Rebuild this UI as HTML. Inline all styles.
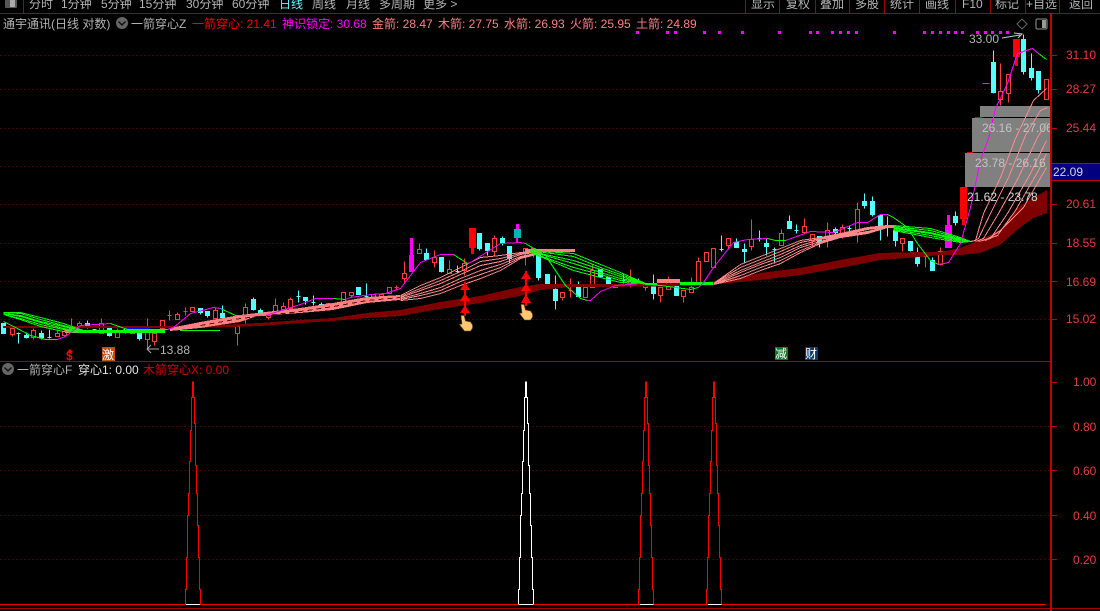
<!DOCTYPE html>
<html><head><meta charset="utf-8"><style>
html,body{margin:0;padding:0;background:#000;overflow:hidden}
svg{display:block}
text{font-family:"Liberation Sans","WenQuanYi Zen Hei","Noto Sans CJK SC",sans-serif;font-size:12px;letter-spacing:0}
.g{fill:#b4b4b4}.a{fill:#e83c3c}.p{fill:#ff8080}
</style></head><body>
<svg width="1100" height="611" viewBox="0 0 1100 611" xmlns="http://www.w3.org/2000/svg">
<defs><clipPath id="c"><rect x="0" y="0" width="1050" height="611"/></clipPath></defs>
<rect width="1100" height="611" fill="#000"/>
<g shape-rendering="crispEdges">
<g fill="none" stroke="#7a1010" stroke-dasharray="1 3" transform="translate(.5 .5)">
<path d="M0 55H1050M0 89H1050M0 128H1050M0 166H1050M0 204H1050M0 243H1050M0 281H1050M0 319H1050M0 426H1050M0 470H1050M0 515H1050M0 559H1050"/>
</g>
<path d="M0 13.5H1100M23.5 0V13M745.5 0V13M779.5 0V13M815.5 0V13M849.5 0V13M884.5 0V13M919.5 0V13M955.5 0V13M990.5 0V13M1025.5 0V13M1059.5 0V13M0 361.5H1050M0 608.5H1100" stroke="#a80000" fill="none"/>
<path d="M1051 13V611" stroke="#c00000" stroke-width="2" fill="none"/>
<path d="M1052 55.500h5M1052 89.500h5M1052 128.500h5M1052 204.500h5M1052 243.500h5M1052 281.500h5M1052 319.500h5M1052 382.500h5M1052 426.500h5M1052 470.500h5M1052 515.500h5M1052 559.500h5" stroke="#c00000" fill="none"/>
<!-- magenta dots -->
<path fill="#ff00ff" d="M636 31h3v3h-3zM666 31h3v3h-3zM674 31h3v3h-3zM703 31h3v3h-3zM718 31h3v3h-3zM741 31h3v3h-3zM778 31h3v3h-3zM809 31h3v3h-3zM816 31h3v3h-3zM831 31h3v3h-3zM839 31h3v3h-3zM847 31h3v3h-3zM855 31h3v3h-3zM893 31h3v3h-3zM923 31h3v3h-3zM931 31h3v3h-3zM939 31h3v3h-3zM947 31h3v3h-3zM954 31h3v3h-3zM961 31h3v3h-3zM976 31h3v3h-3zM984 31h3v3h-3zM991 31h3v3h-3zM999 31h3v3h-3zM1006 31h3v3h-3z"/>
<!-- red hollow candles -->
<path transform="translate(.5 .5)" fill="none" stroke="#ff3c3c" d="M12 326V328m-2 0h4v6h-4zM12 334V336M33 328V330m-2 0h4v7h-4zM33 337V339M57 330V333m-2 0h4v3h-4zM64 327V331m-2 0h4v4h-4zM71 318V328m-2 0h4v2h-4zM79 321V323m-2 0h4v4h-4zM101 318V323m-2 0h4v10h-4zM117 328V330m-2 0h4v7h-4zM132 329V330m-2 0h4v3h-4zM147 318V330m-2 0h4v9h-4zM147 339V348M154 330V333m-2 0h4v8h-4zM154 341V345M160 320h4v8h-4zM169 310V320M167 315h4M177 312V314m-2 0h4v5h-4zM185 307V315M183 311h4M190 307h4v4h-4zM215 308V310m-2 0h4v8h-4zM235 326h4v7h-4zM237 333V345M245 303V307m-2 0h4v8h-4zM245 315V323M266 315h4v2h-4zM268 317V319M275 298V305m-2 0h4v8h-4zM283 302V306m-2 0h4v3h-4zM283 309V310M290 297V299m-2 0h4v9h-4zM326 303h4v3h-4zM334 303h4v1h-4zM341 292h4v11h-4zM349 292h4v3h-4zM351 295V297M371 294h4v3h-4zM379 294h4v3h-4zM387 287h4v6h-4zM394 287h4M396 285V290M404 261V273m-2 0h4v5h-4zM404 278V282M419 243V249m-2 0h4v4h-4zM434 250V257m-2 0h4v5h-4zM434 262V267M449 260V269m-2 0h4v4h-4zM464 258V263m-2 0h4v7h-4zM464 270V275M494 235V238m-2 0h4v13h-4zM494 251V255M523 248h4v4h-4zM525 252V265M531 248h4v2h-4zM533 250V257M560 292h4v5h-4zM562 297V300M570 278V297M568 290h4M583 287h4v10h-4zM592 264V270m-2 0h4v17h-4zM613 284h4v3h-4zM630 269V279m-2 0h4v6h-4zM630 285V287M643 285h4v2h-4zM645 287V290M658 287h4v8h-4zM660 295V302M668 276V279m-2 0h4v10h-4zM681 290h4v6h-4zM683 296V302M691 277V287m-2 0h4v5h-4zM698 257V261m-2 0h4v23h-4zM704 252h4v9h-4zM711 248h4v19h-4zM726 238h4v7h-4zM728 245V249M751 219V239m-2 0h4v7h-4zM751 246V250M781 229V233m-2 0h4v12h-4zM804 218V226m-2 0h4v6h-4zM810 234h4v6h-4zM812 240V245M827 222V230m-2 0h4v8h-4zM827 238V247M842 224V227m-2 0h4v7h-4zM842 234V238M857 202V209m-2 0h4v24h-4zM857 233V242M900 238h4v5h-4zM902 243V251M925 256V267M923 256h4M940 247V251m-2 0h4v13h-4zM940 264V265M982 83H989M1000 63V91m-2 0h4v8h-4zM1000 99V105M1006 74h4v19h-4zM1008 93V102M1044 79h4v20h-4z"/>
<!-- solid red -->
<path fill="#ff0000" d="M469 228h7v20h-7zM471 248h3v6h-3zM960 187h7v32h-7zM962 219h3v6h-3zM1013 39h7v18h-7zM1015 57h3v9h-3z"/>
<!-- cyan candles -->
<path transform="translate(.5 .5)" fill="#54ffff" stroke="#54ffff" d="M1 323h4v10h-4zM18 332V343M16 333h4M26 332V338M24 335h4v2h-4zM41 330V339M39 333h4v4h-4zM49 329V338M47 337h4M87 320V328M85 323h4v4h-4zM92 329h4M109 327V336M107 328h4v7h-4zM125 327V333M123 329h4M139 330V340M137 332h4v6h-4zM200 308V314M198 308h4v4h-4zM205 311h4v4h-4zM207 315V317M222 305V317M220 313h4v4h-4zM228 318h4v2h-4zM230 317V323M253 297V310M251 299h4v10h-4zM260 308V313M258 310h4v3h-4zM298 290V302M296 296h4M303 297h4v3h-4zM305 300V304M313 295V305M311 302h4M321 302V307M319 304h4v2h-4zM356 287h4v7h-4zM366 283V298M364 296h4M426 248V260M424 253h4v6h-4zM439 257h4v14h-4zM441 271V272M457 265V273M455 271h4M477 233h4v15h-4zM479 248V250M485 243h4v7h-4zM487 250V255M502 236V245M500 238h4v5h-4zM507 246h4v12h-4zM509 258V262M536 253h4v24h-4zM538 277V280M545 274h4v9h-4zM555 275V309M553 289h4v11h-4zM578 281V296M576 286h4v10h-4zM598 269h4v7h-4zM606 277h4v7h-4zM623 273V283M621 280h4M638 278V285M636 281h4v4h-4zM653 274V299M651 285h4v8h-4zM676 279V295M674 285h4v10h-4zM721 235V251M719 249h4M736 238V247M734 242h4v5h-4zM744 243V262M742 249h4v2h-4zM759 230V241M757 238h4M766 238V255M764 243h4v3h-4zM774 247V263M772 249h4M789 215V228M787 221h4v7h-4zM796 224V233M794 230h4M819 236V247M817 236h4v6h-4zM835 227V236M833 229h4v3h-4zM849 226V233M847 228h4M864 193V208M862 201h4v4h-4zM872 196V216M870 201h4v13h-4zM878 215h4v10h-4zM880 225V240M887 216V236M885 225h4M893 230h4v10h-4zM895 240V246M908 241h4v9h-4zM910 250V251M917 247V266M915 252h4v11h-4zM930 260h4v10h-4zM932 257V270M955 211V225M953 216h4v6h-4zM993 50V93M991 62h4v30h-4zM1023 34V74M1021 39h4v32h-4zM1031 53V80M1029 68h4v9h-4zM1038 71V93M1036 71h4v18h-4z"/>
<!-- magenta / teal candles -->
<path fill="#ff00ff" d="M410 238h3v17h-3zM409 255h5v17h-5zM516 224h3v5h-3zM516 238h2v5h-2zM947 215h3v10h-3zM945 225h7v23h-7z"/>
<path fill="#00b4b4" d="M514 229h7v9h-7z"/>
<!-- gray boxes -->
<path fill="#808080" d="M980 106h70v11h-70zM972 118h78v34h-78zM965 153h85v34h-85z"/>
<path fill="#e00000" d="M975 117h7v1h-7zM967 152h6v1h-6z"/>
<!-- dark red band -->
<polygon fill="#7f0000" points="3,326 200,326 260,323 300,320 333,318 367,313 400,310 440,302 480,296 520,287 540,284 570,284 600,284 700,283 740,277 760,273 800,268 840,260 880,253 920,252 940,252 960,248 980,240 1000,230 1017,208 1033,198 1047,190 1047,213 1033,218 1017,230 1000,245 980,253 960,255 940,255 920,257 880,260 840,268 800,275 760,280 740,282 700,286 600,287 570,287 540,290 520,296 480,303 440,309 400,316 367,318 333,321 300,323 260,326 200,328 3,328"/>
<!-- pink solid parts -->
<polygon fill="#ff8080" points="170,328 200,322 240,315 257,313 300,308 333,303 367,297 400,295 400,300 367,303 333,310 300,313 257,316 240,322 200,328 170,331"/>
<path fill="#ff8080" d="M65 330h18v3h-18zM100 330h30v2h-30zM525 249h50v3h-50zM657 279h23v4h-23zM885 225h10v3h-10z"/>
<path transform="translate(.5 .5)" fill="none" stroke="#5a1010" stroke-dasharray="5 4" d="M200 325L240 318L300 311L333 306L367 300L400 297"/>
<!-- pink fans -->
<g fill="none" stroke="#ff8a8a" transform="translate(.5 .5)">
<polyline points="400,295 420,285 440,277 460,267 480,257 500,255 520,252 540,250"/>
<polyline points="400,296 420,288 440,280 460,271 480,261 500,258 520,253 540,251"/>
<polyline points="400,297 420,290 440,283 460,274 480,265 500,261 520,254 540,251"/>
<polyline points="400,298 420,293 440,287 460,278 480,270 500,264 520,256 540,252"/>
<polyline points="400,299 420,295 440,290 460,281 480,274 500,267 520,257 540,252"/>
<polyline points="400,300 420,298 440,293 460,285 480,278 500,270 520,258 540,253"/>
<polyline points="713,283 740,264 760,256 780,248 800,240 820,237 840,233 867,227 887,225"/>
<polyline points="713,283 740,267 760,259 780,251 800,242 820,238 840,234 867,228 887,225"/>
<polyline points="713,283 740,270 760,262 780,254 800,245 820,239 840,235 867,229 887,226"/>
<polyline points="713,284 740,272 760,264 780,257 800,247 820,241 840,235 867,231 887,226"/>
<polyline points="713,284 740,275 760,267 780,260 800,250 820,242 840,236 867,232 887,227"/>
<polyline points="713,284 740,278 760,270 780,263 800,252 820,243 840,237 867,233 887,227"/>
<polyline points="970,241 975,240 983,213 1000,177 1015,138 1033,100 1046,88"/>
<polyline points="972,241 978,238 990,213 1008,177 1025,135 1040,110 1047,107"/>
<polyline points="975,241 983,238 998,213 1018,177 1037,137 1046,122"/>
<polyline points="978,241 990,238 1007,213 1030,173 1046,140"/>
<polyline points="982,240 997,235 1015,210 1038,170 1046,153"/>
<polyline points="985,240 1000,230 1023,207 1046,167"/>
</g>
<!-- green fans -->
<g fill="none" stroke="#00ff00" transform="translate(.5 .5)">
<polyline points="3,312 20,312 40,317 63,323 83,330"/>
<polyline points="3,312 20,313 40,319 63,325 83,330"/>
<polyline points="3,313 20,315 40,321 63,326 83,331"/>
<polyline points="3,313 20,316 40,322 63,328 83,331"/>
<polyline points="3,314 20,318 40,324 63,329 83,332"/>
<polyline points="3,314 20,319 40,326 63,331 83,332"/>
<polyline points="530,250 573,253 600,264 620,272 645,283"/>
<polyline points="530,250 573,256 600,267 620,274 645,283"/>
<polyline points="530,251 573,260 600,269 620,276 645,283"/>
<polyline points="530,251 573,263 600,272 620,278 645,283"/>
<polyline points="530,252 573,267 600,274 620,280 645,283"/>
<polyline points="530,252 573,270 600,277 620,282 645,283"/>
<polyline points="893,225 930,228 960,237 970,241"/>
<polyline points="893,226 930,230 960,238 970,241"/>
<polyline points="893,227 930,232 960,239 970,241"/>
<polyline points="893,228 930,233 960,240 970,241"/>
<polyline points="893,229 930,235 960,241 970,241"/>
<polyline points="893,230 930,237 960,242 970,241"/>
</g>
<path fill="#00ff00" d="M83 330h82v3h-82zM680 282h33v3h-33zM645 283h12v2h-12zM180 330h40v1h-40z"/>
<path fill="#0000ff" d="M125 328h25v2h-25z"/>
<!-- thin curve -->
<g fill="none" transform="translate(.5 .5)">
<polyline stroke="#00ff00" points="3,321 15,327 30,335 45,339 57,339"/>
<polyline stroke="#ff00ff" points="57,339 65,336 73,330 80,325 95,324 110,323"/>
<polyline stroke="#00ff00" points="110,323 127,329 167,329"/>
<polyline stroke="#ff00ff" points="167,329 173,327 190,313 213,307 220,308"/>
<polyline stroke="#00ff00" points="220,308 235,315 265,315"/>
<polyline stroke="#ff00ff" points="265,315 300,304 315,298 333,298"/>
<polyline stroke="#00ff00" points="333,298 345,299"/>
<polyline stroke="#ff00ff" points="345,299 350,297 370,294 385,293 400,288 420,262 440,254 453,254"/>
<polyline stroke="#00ff00" points="453,254 467,263"/>
<polyline stroke="#ff00ff" points="467,263 470,262 500,243 520,242 525,243"/>
<polyline stroke="#00ff00" points="525,243 545,255 565,285 580,298 587,300"/>
<polyline stroke="#ff00ff" points="587,300 590,300 600,291 615,285 640,283"/>
<polyline stroke="#00ff00" points="640,283 660,285 690,289 698,287"/>
<polyline stroke="#ff00ff" points="698,287 703,282 713,267 733,242 747,239 767,238"/>
<polyline stroke="#00ff00" points="767,238 775,240 785,240"/>
<polyline stroke="#ff00ff" points="785,240 810,231 833,232 857,222 867,222 880,214 887,214"/>
<polyline stroke="#00ff00" points="887,214 893,217 907,227 917,243 930,260 938,264"/>
<polyline stroke="#ff00ff" points="938,264 948,262 960,243 970,207 980,160 988,138 995,108 1007,83 1017,53 1032,48 1038,53"/>
<polyline stroke="#00ff00" points="1038,53 1046,59"/>
</g>
<!-- red arrows -->
<path fill="#ff0000" d="M464 282h2v34h-2zM460 290l5-8 5 8zM460 301l5-8 5 8zM460 313l5-8 5 8zM525 271h2v35h-2zM521 279l5-8 5 8zM521 291l5-8 5 8zM521 303l5-9 5 9z"/>
<!-- sub chart baseline -->
<path fill="#ff0000" d="M0 604h1046v1H0z"/>
<path fill="#fff" d="M186 604h14v1h-14zM519 604h14v1h-14zM640 604h14v1h-14zM708 604h14v1h-14z"/>
<g fill="none" transform="translate(.5 .5)">
<path stroke="#ff0000" d="M185 604V589h1V557h1V515h1V493h1V461h1V430h1V397h1V381M193 381V397h1V423h1V465h1V493h1V525h1V557h1V589h1V604"/>
<path stroke="#fff" d="M518 604V589h1V557h1V515h1V493h1V461h1V430h1V397h1V381M526 381V397h1V423h1V465h1V493h1V525h1V557h1V589h1V604"/>
<path stroke="#ff0000" d="M638 604V589h1V557h1V515h1V493h1V461h1V430h1V397h1V381M646 381V397h1V423h1V465h1V493h1V525h1V557h1V589h1V604"/>
<path stroke="#ff0000" d="M706 604V589h1V557h1V515h1V493h1V461h1V430h1V397h1V381M714 381V397h1V423h1V465h1V493h1V525h1V557h1V589h1V604"/>
</g>
<!-- badges -->
<rect x="102" y="347" width="13" height="14" fill="#c05010"/>
<rect x="775" y="347" width="13" height="13" fill="#0a7a20"/>
<rect x="805" y="347" width="13" height="13" fill="#0a3a6a"/>
<rect x="1052" y="164" width="48" height="16" fill="#000080"/>
<rect x="1052" y="180" width="48" height="1" fill="#c00000"/>
<rect x="1052" y="163" width="48" height="1" fill="#c00000"/>
</g>
<!-- hands -->
<g fill="#ffc870" stroke="#7a4a18" stroke-width=".6">
<path d="M461 315.500h3l1.500 5.500 5 1 2 3v3l-2 3h-6l-5-6.500 2.500-.5z"/>
<path d="M521 304.500h3l1.500 5.500 5 1 2 3v3l-2 3h-6l-5-6.500 2.500-.5z"/>
</g>
<!-- top bar text -->
<g class="g">
<text x="29" y="8">分时</text><text x="61" y="8">1分钟</text><text x="101" y="8">5分钟</text><text x="139" y="8">15分钟</text><text x="186" y="8">30分钟</text><text x="232" y="8">60分钟</text>
<text x="279" y="8" style="fill:#54ffff">日线</text><text x="312" y="8">周线</text><text x="346" y="8">月线</text><text x="379" y="8">多周期</text><text x="423" y="8">更多 &gt;</text>
<text x="751" y="8">显示</text><text x="786" y="8">复权</text><text x="820" y="8">叠加</text><text x="855" y="8">多股</text><text x="890" y="8">统计</text><text x="925" y="8">画线</text><text x="962" y="8">F10</text><text x="995" y="8">标记</text><text x="1026" y="8">+自选</text><text x="1069" y="8">返回</text>
</g>
<rect x="5" y="-2" width="12" height="10" rx="1" fill="#555"/><rect x="10" y="-1" width="5" height="8" fill="#aaa"/>
<!-- title row -->
<text class="g" x="3" y="28">通宇通讯(日线 对数)</text>
<circle cx="122" cy="23" r="6" fill="#666"/><path d="M118.500 21.500l3.500 3.500 3.500-3.500" stroke="#111" stroke-width="1.500" fill="none"/>
<text class="g" x="131" y="28">一箭穿心Z</text>
<text x="192" y="28" fill="#ff0000">一箭穿心: 21.41</text>
<text x="282" y="28" fill="#ff00ff">神识锁定: 30.68</text>
<text class="p" x="372" y="28">金箭: 28.47</text><text class="p" x="438" y="28">木箭: 27.75</text><text class="p" x="504" y="28">水箭: 26.93</text><text class="p" x="570" y="28">火箭: 25.95</text><text class="p" x="636" y="28">土箭: 24.89</text>
<path d="M1022 19l5 5-5 5-5-5z" fill="none" stroke="#666"/>
<rect x="1036" y="19" width="11" height="10" rx="1.500" fill="none" stroke="#777" stroke-width="1.300"/><rect x="1042" y="20" width="4" height="8" fill="#999"/>
<!-- axis labels -->
<text class="a" x="1066" y="59">31.10</text><text class="a" x="1066" y="93">28.27</text><text class="a" x="1066" y="132">25.44</text><text class="a" x="1066" y="208">20.61</text><text class="a" x="1066" y="247">18.55</text><text class="a" x="1066" y="286">16.69</text><text class="a" x="1066" y="323">15.02</text>
<text x="1053" y="176" fill="#d8d8d8">22.09</text>
<text class="a" x="1073" y="386">1.00</text><text class="a" x="1073" y="431">0.80</text><text class="a" x="1073" y="475">0.60</text><text class="a" x="1073" y="520">0.40</text><text class="a" x="1073" y="564">0.20</text>
<!-- box labels -->
<g clip-path="url(#c)">
<text x="982" y="132" fill="#c4c4c4">26.16 - 27.06</text>
<text x="975" y="167" fill="#c4c4c4">23.78 - 26.16</text>
<text x="967" y="201" fill="#d8d8d8">21.62 - 23.78</text>
</g>
<!-- chart notes -->
<text class="g" x="969" y="43">33.00</text>
<path d="M1002 38l18-3M1014 33l8 1-4 4" stroke="#ccc" fill="none"/>
<text class="g" x="160" y="354">13.88</text>
<path d="M147 349h12M151 345l-4 4 4 4" stroke="#aaa" fill="none"/>
<text x="66" y="360" fill="#ff0000" style="font-weight:bold">$</text>
<path d="M70 349l-3 3h6z" fill="#ff0000"/>
<text x="102" y="359" fill="#fff">激</text><text x="775" y="358" fill="#fff">减</text><text x="805" y="358" fill="#fff">财</text>
<!-- sub title -->
<circle cx="8" cy="369" r="6" fill="#666"/><path d="M4.500 367.500l3.500 3.500 3.500-3.500" stroke="#111" stroke-width="1.500" fill="none"/>
<text class="g" x="17" y="374">一箭穿心F</text>
<text x="78" y="374" fill="#e6e6e6">穿心1: 0.00</text>
<text x="143" y="374" fill="#d40000">木箭穿心X: 0.00</text>
</svg>
</body></html>
